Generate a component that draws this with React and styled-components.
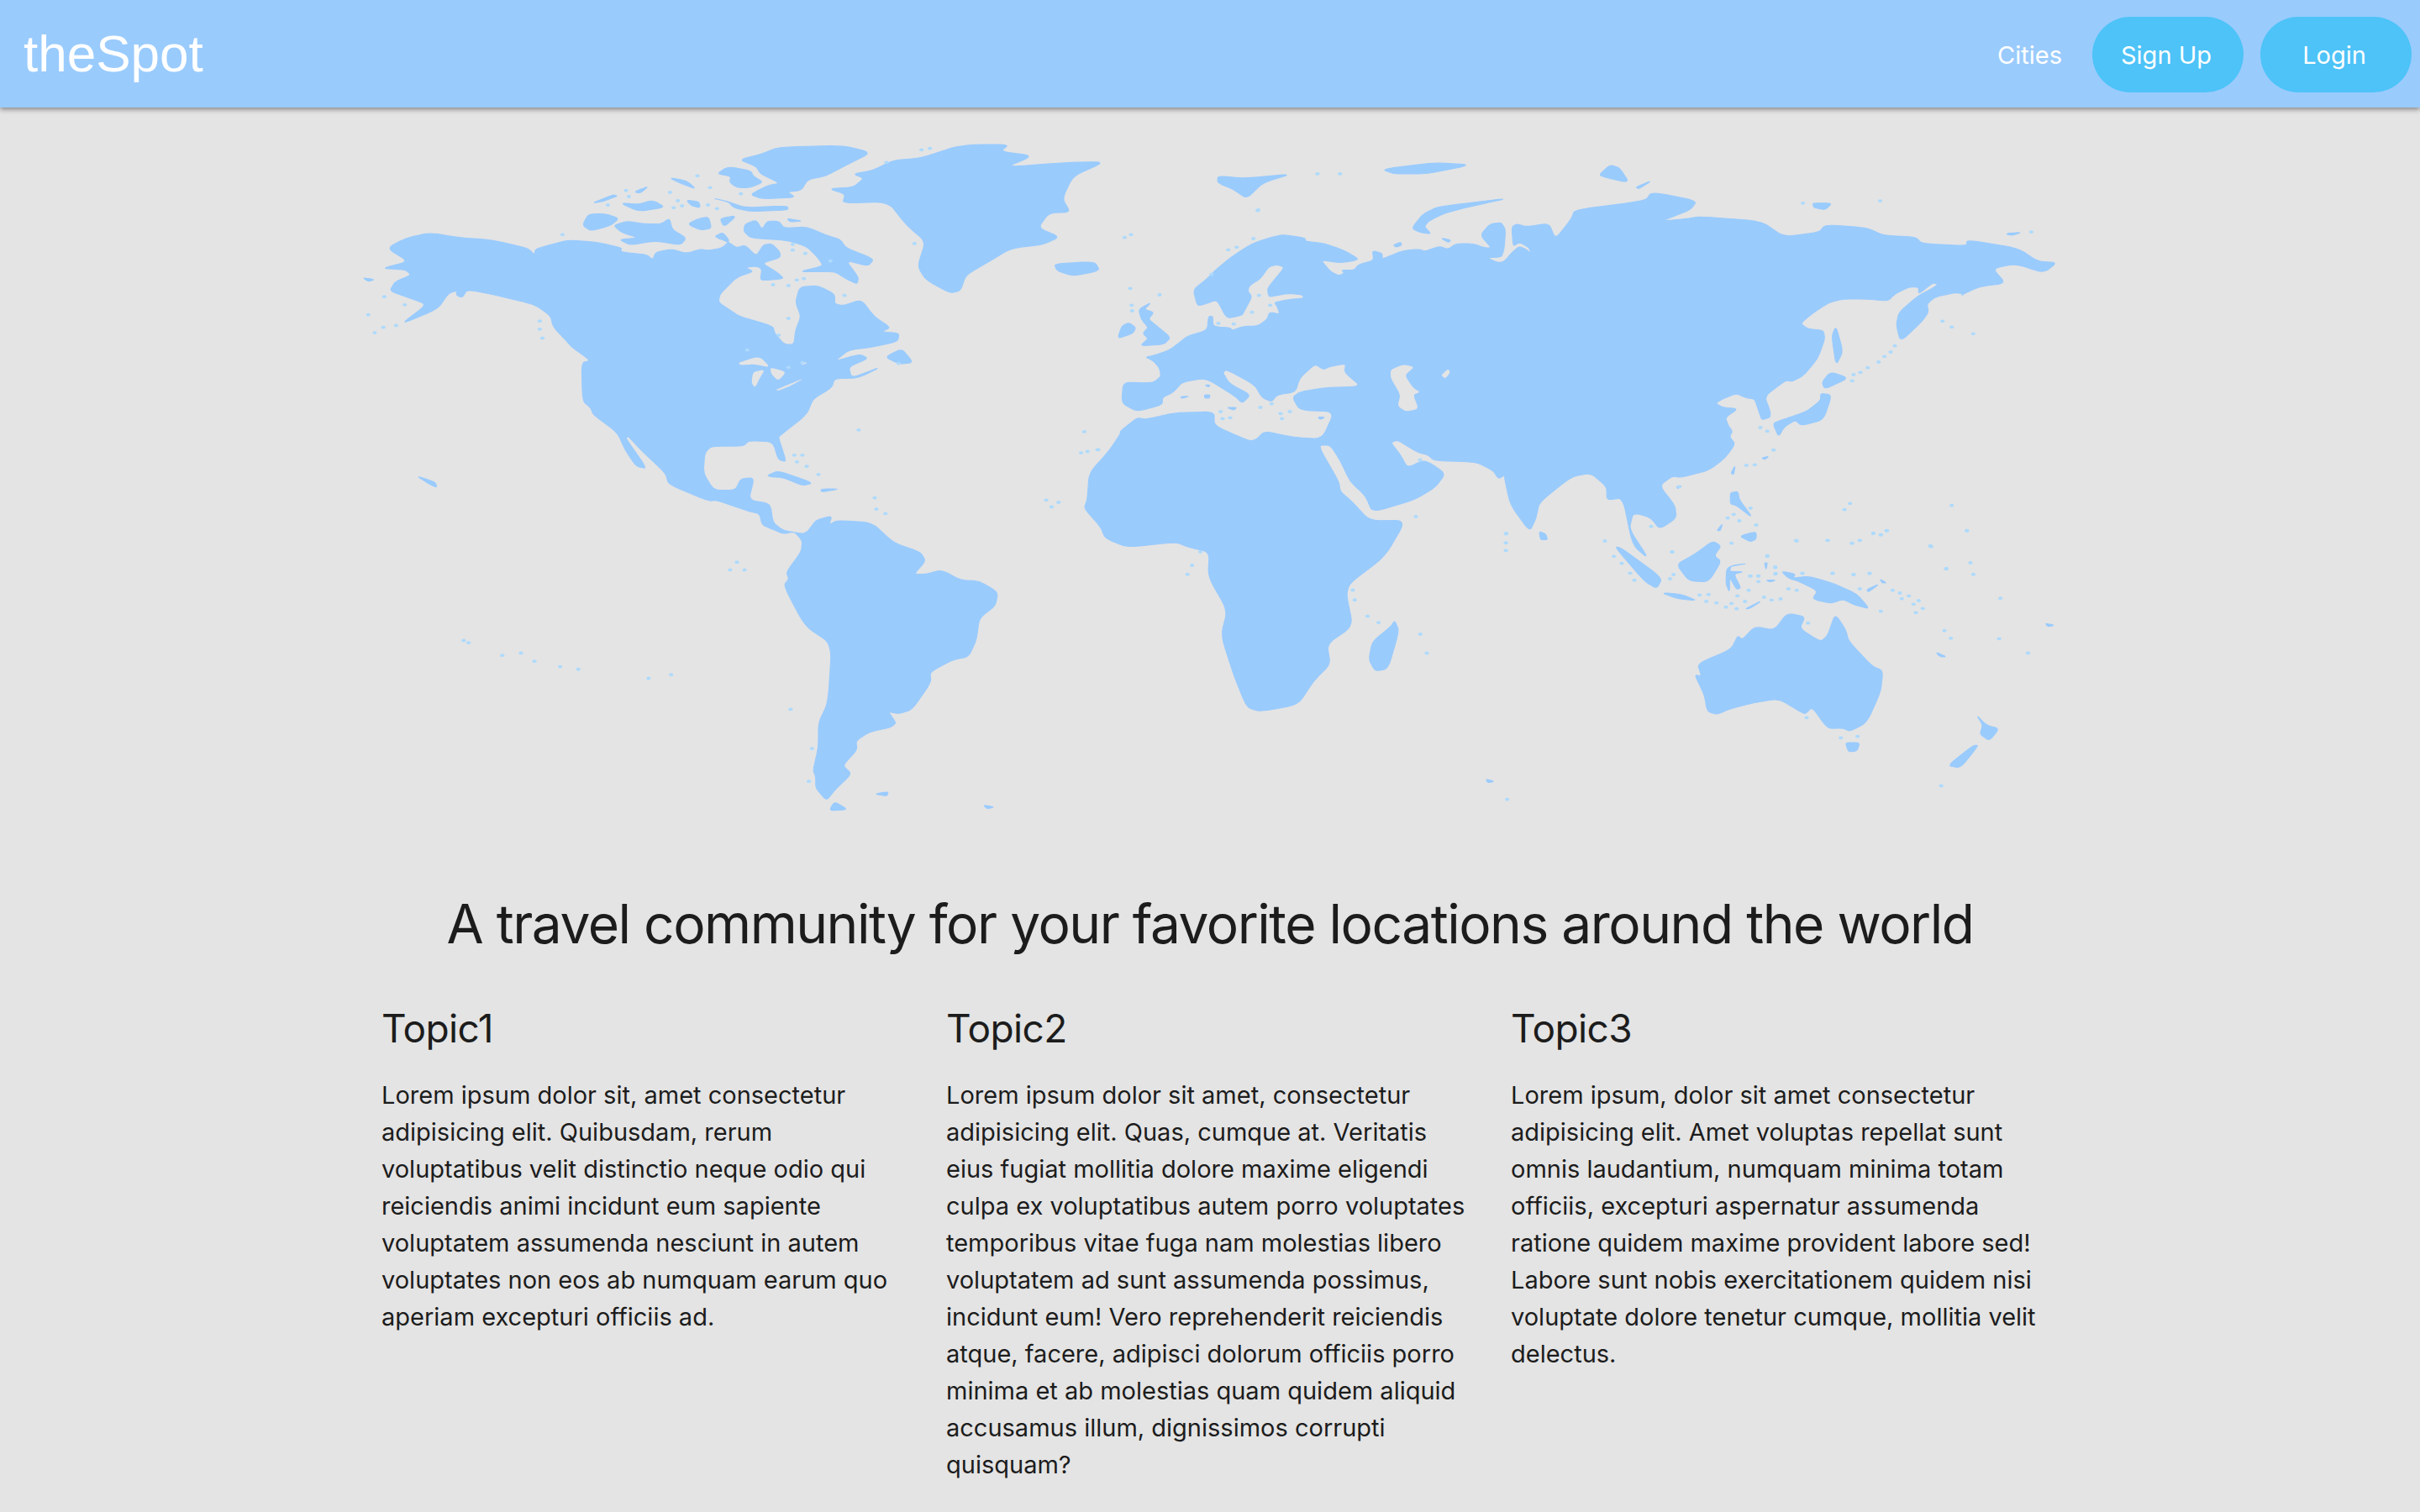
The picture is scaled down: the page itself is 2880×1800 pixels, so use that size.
import styled, { createGlobalStyle } from 'styled-components'

const GlobalStyle = createGlobalStyle`
  html, body { margin: 0; padding: 0; background: #e4e4e4; }
  body { font-family: Inter, "Noto Sans", sans-serif; color: #1c1c1c; }
`

const Page = styled.div`
  width: 2880px;
  min-height: 1800px;
  overflow: hidden;
  background: #e4e4e4;
`

const NavBar = styled.header`
  height: 128px;
  box-sizing: border-box;
  padding: 2px 10px 0 28px;
  display: flex;
  align-items: center;
  justify-content: space-between;
  background: #9acbfd;
  box-shadow: 0 2px 6px rgba(0, 0, 0, 0.45);
  position: relative;
`

const Logo = styled.div`
  font-family: "Liberation Sans", Arial, sans-serif;
  font-size: 62px;
  color: #fff;
  margin-bottom: 3px;
`

const NavLinks = styled.nav`
  display: flex;
  align-items: center;
  gap: 20px;
`

const NavLink = styled.a`
  color: #fff;
  font-size: 29px;
  margin-right: 16px;
`

const NavButton = styled.button`
  width: 180px;
  height: 90px;
  padding: 0 4px 0 0;
  border: 0;
  border-radius: 45px;
  background: #4dc3f8;
  color: #fff;
  font-family: inherit;
  font-size: 29px;
`

const MapSvg = styled.svg`
  display: block;
  width: 2080px;
  height: 840px;
  margin: 12px auto 0;
`

const Headline = styled.h1`
  margin: 80px 0 0;
  text-align: center;
  font-size: 64px;
  line-height: 80px;
  font-weight: 400;
  letter-spacing: -1.47px;
`

const Columns = styled.section`
  display: grid;
  grid-template-columns: repeat(3, 630px);
  column-gap: 42px;
  padding: 54px 0 0 454px;
`

const TopicTitle = styled.h2`
  margin: 0 0 28px;
  font-size: 46px;
  line-height: 60px;
  font-weight: 400;
  letter-spacing: -0.6px;
`

const TopicText = styled.p`
  margin: 0;
  font-size: 29px;
  line-height: 44px;
`

const topics = [
  {
    title: 'Topic1',
    text: 'Lorem ipsum dolor sit, amet consectetur adipisicing elit. Quibusdam, rerum voluptatibus velit distinctio neque odio qui reiciendis animi incidunt eum sapiente voluptatem assumenda nesciunt in autem voluptates non eos ab numquam earum quo aperiam excepturi officiis ad.',
  },
  {
    title: 'Topic2',
    text: 'Lorem ipsum dolor sit amet, consectetur adipisicing elit. Quas, cumque at. Veritatis eius fugiat mollitia dolore maxime eligendi culpa ex voluptatibus autem porro voluptates temporibus vitae fuga nam molestias libero voluptatem ad sunt assumenda possimus, incidunt eum! Vero reprehenderit reiciendis atque, facere, adipisci dolorum officiis porro minima et ab molestias quam quidem aliquid accusamus illum, dignissimos corrupti quisquam?',
  },
  {
    title: 'Topic3',
    text: 'Lorem ipsum, dolor sit amet consectetur adipisicing elit. Amet voluptas repellat sunt omnis laudantium, numquam minima totam officiis, excepturi aspernatur assumenda ratione quidem maxime provident labore sed! Labore sunt nobis exercitationem quidem nisi voluptate dolore tenetur cumque, mollitia velit delectus.',
  },
]

// the coastlines were traced in several crops, each has its own origin and scale
const west = [400, 140, 0.6378, 0.5357]
const east = [1300, 140, 0.7653, 0.5357]
const europe = [1320, 240, 1 / 3, 1 / 3]
const canada = [660, 160, 1 / 3, 1 / 3]
const japan = [1950, 300, 1 / 3, 1 / 3]
const oceania = [1900, 620, 1 / 3, 1 / 3]

const trace = ([ox, oy, sx, sy], text) =>
  text.split(' ').map((pair) => {
    const [x, y] = pair.split(',').map(Number)
    return [ox + x * sx, oy + y * sy]
  })

const americas = [
  ...trace(west, '95,290 130,268 175,256 225,266 290,272 358,290 370,305 372,292'),
  ...trace(canada, '0,390 50,378 150,385 240,405 235,420 330,430 350,448 362,420 420,410 470,425 520,410 550,415 600,405 625,380 600,350 570,365 620,385 650,405 680,395 720,435 745,395 775,390 805,420 805,440 740,460 790,490 820,515 760,520 735,520 740,480 720,470 680,475 710,490 650,510 590,570 585,600 630,630 660,650 780,685 785,710 820,750 855,750 860,700 880,650 860,600 875,545 940,540 1000,570 1000,605 1030,612 1095,590 1140,650 1200,690 1165,705 1230,710 1225,740 1130,760 1050,770 1000,810 1090,785 1120,800 1050,830 1060,870 1165,830 1085,870'),
  ...trace(west, '930,580 925,600 890,625 878,660 830,705 825,710 840,765 825,760 815,720 770,718 760,730 700,730 688,745 685,790 705,828 745,828 755,803 780,800 770,850 810,858 815,900 835,918 870,925 880,920 895,895 925,885 920,905 935,895 1000,900 1040,945 1090,965 1100,985 1078,1015 1100,1015 1130,1005 1165,1028 1200,1030 1235,1055 1230,1085 1200,1112 1195,1160 1180,1198 1150,1205 1108,1232 1110,1255 1075,1315 1050,1325 1030,1320 1045,1345 1035,1355 995,1365 970,1385 972,1405 945,1440 962,1458 930,1495 915,1518 895,1490 895,1465 890,1450 900,1400 900,1345 918,1300 925,1170 875,1130 835,1040 845,1025 840,1010 868,965 870,940 855,920 835,925 815,915 795,905 790,880 770,875 710,850 695,852 620,815 615,790 570,740 545,708 540,712 580,780 560,775 540,740 525,700 480,660 475,645 460,630 458,545 475,540 440,510 425,490 405,465 400,440 370,415 300,395 245,382 235,400 225,395 225,385 210,390 190,425 120,460 170,415 135,400 100,385 110,365 140,350 130,338 85,335 135,320'),
]

const eurasiaAfrica = [
  ...trace(europe, '50,645 130,648 160,645 185,625 180,595 160,570 130,555 160,550 215,530 250,505 280,480 350,460 355,410 370,410 370,440 385,448 430,450 440,460 480,445 530,445 565,420 572,395 610,402 600,375 590,360 640,350 695,345 690,332 640,328 600,335 570,340 565,310 610,255 625,235 600,225 570,232 540,275 500,300 495,320 510,340 480,395 475,405 420,418 385,350 345,365 315,372 300,315 350,275 385,240 440,195 510,150 570,130 620,118 700,130 700,142 770,150 840,175 890,205 870,212 820,218 755,208 790,250 820,265 840,255 830,245 875,245 890,225 945,210 940,175 975,185 975,205 1000,195 1050,175 1110,170 1125,178 1180,160 1210,170 1240,150 1300,150 1340,165 1365,165 1325,120 1360,80 1400,75 1415,100 1410,170 1400,198 1350,200 1385,218 1410,215 1440,180 1465,160 1490,172 1505,185 1500,165 1465,145 1442,160 1438,90 1455,80 1490,90'),
  ...trace(east, '710,235 720,270 745,225 750,205 860,185 870,165 940,185 930,205 885,230 925,225 945,220 1040,230 1075,265 1130,255 1140,238 1205,245 1230,262 1280,265 1290,280 1360,285 1360,272 1440,290 1470,320 1500,322 1480,345 1435,325 1400,335 1420,368 1380,375 1350,395'),
  ...trace(japan, '1165,150 1130,145 1060,160 1030,185 1035,215 1010,250 935,320 920,260 930,215 1000,155 1050,130 1070,115 1050,110 1000,150 1000,125 965,125 915,150 890,175 820,168 730,168 680,180 620,220 578,255 605,275 660,280 665,310 640,380 590,440 550,462 525,458 450,515 470,570 470,590 440,600 430,570 415,525 380,520 350,505 300,525 275,540 300,555 355,560 310,590 320,620 335,640 325,660 345,685 310,735 250,780 150,805 120,800 75,835 130,905 135,950 75,990 45,950 0,935'),
  ...trace(east, '840,882 835,915 865,980 840,950 825,845 800,850 800,820 775,790 745,798 695,855 690,890 680,920 650,860 640,795'),
  ...trace(europe, '1415,975 1390,990 1370,960 1310,930 1160,925 1140,905 1100,895 1060,870 1030,852 1005,860 1040,905 1065,950 1120,925 1150,935 1200,972 1165,1020 1090,1065 940,1110 915,1050 860,1000 825,925 790,870 745,870 820,1000 825,1035 870,1075 930,1140 1060,1138'),
  ...trace(east, '455,975 400,1035 395,1060 405,1130 365,1170 370,1215 345,1250 320,1305 260,1320 240,1310 220,1240 200,1150 210,1095 180,1020 182,965 150,955 130,943 55,955 20,935 13,910 -13,868 -8,850 -5,790'),
  ...trace(europe, '0,890 40,830 40,820 100,772 130,778 230,755 375,750 375,800 500,855 525,850 555,820 660,842 760,848 805,750 680,745 655,700 680,680 770,665 900,660 840,610 845,578 785,590 765,600 735,580 680,630 665,680 600,690 580,715 545,700 520,655 420,600 405,610 430,650 505,690 475,720 450,695 345,630 260,645 230,680 190,700 190,725 100,750 45,720'),
]

const land = [
  americas,
  eurasiaAfrica,
  // greenland, iceland
  trace(west, '945,190 1030,187 1065,240 1100,275 1085,330 1100,360 1145,390 1165,385 1175,350 1215,322 1260,290 1320,282 1350,265 1310,245 1330,212 1370,210 1355,180 1375,130 1435,98 1360,100 1250,110 1300,85 1240,75 1255,60 1190,60 1155,65 1130,75 1090,90 1040,95 1000,118 965,125 985,135 965,155 920,158 950,170'),
  trace(west, '1340,325 1415,320 1425,340 1375,352 1345,340'),
  // canadian arctic
  trace(canada, '680,320 720,305 740,340 760,310 800,310 820,335 900,330 970,360 1020,375 1040,405 1140,445 1120,470 1040,450 1085,510 1080,535 1040,515 1000,490 940,490 875,490 960,470 940,440 900,400 830,378 700,370 675,345'),
  trace(canada, '660,90 740,70 800,45 1030,40 1130,65 1040,110 965,150 905,160 880,200 830,205 860,225 740,230 700,215 735,195 770,180 805,175 735,140 720,115'),
  trace(canada, '580,140 620,115 700,130 710,150 745,170 700,190 650,190 625,170 630,150'),
  trace(canada, '565,228 620,240 680,262 830,255 835,270 700,275 640,262 620,240'),
  trace(canada, '235,245 300,250 350,235 395,260 300,275'),
  trace(canada, '135,245 210,215 225,220 170,240'),
  trace(canada, '285,205 335,185 305,210'),
  trace(canada, '410,155 470,165 505,195 450,175'),
  trace(canada, '470,235 515,240 520,262 490,255'),
  trace(canada, '100,325 120,285 180,283 230,300 200,325 130,345'),
  trace(canada, '210,325 260,310 320,320 380,320 410,300 420,340 470,370 450,395 360,380 270,395 230,375 300,370 240,350'),
  trace(canada, '475,320 515,300 550,295 560,335 520,342'),
  trace(canada, '590,300 650,290 605,330'),
  trace(canada, '830,300 885,310 840,312'),
  trace(canada, '1180,795 1240,765 1280,815 1230,820'),
  // caribbean, small ones round the americas
  trace(west, '805,795 825,785 890,812 870,818 835,800 810,798'),
  trace(west, '905,825 940,825 905,832'),
  trace(west, '50,356 72,360 60,364'),
  trace(west, '150,796 185,810 188,822 175,815'),
  trace(west, '1005,1503 1030,1498 1028,1508'),
  trace(west, '930,1520 955,1538 920,1540'),
  trace(west, '1208,1528 1228,1532 1215,1536'),
  // europe
  trace(europe, '105,385 150,360 125,385 160,395 140,420 165,440 220,485 195,510 110,515 140,490 120,470 140,450 115,420'),
  trace(europe, '30,490 45,445 70,432 95,450 85,470'),
  trace(europe, '420,735 455,735 445,745'),
  trace(europe, '340,690 360,690 358,702 342,702'),
  trace(europe, '342,655 360,655 355,662'),
  trace(europe, '255,697 285,695 260,703'),
  trace(europe, '745,770 770,770 755,778'),
  trace(europe, '705,320 730,312 752,332 725,340'),
  trace(europe, '1080,95 1120,45 1170,20 1280,5 1425,-12 1300,15 1200,40 1140,70 1125,90 1150,115 1110,110'),
  trace(europe, '1015,155 1040,145 1045,155 1025,163'),
  trace(europe, '1185,130 1220,138 1210,146'),
  // east asia
  trace(japan, '480,612 510,600 600,570 650,530 650,505 690,510 660,600 580,620 560,600 520,625 500,660'),
  trace(japan, '685,428 750,450 665,490 655,465'),
  trace(japan, '705,265 730,355 705,405 690,300'),
  trace(japan, '328,860 355,855 360,885 408,950 350,905 328,900'),
  trace(japan, '330,790 345,762 340,795'),
  trace(japan, '360,1015 420,998 420,1025 400,1035'),
  trace(japan, '135,838 155,835 140,845'),
  trace(japan, '280,995 300,970 292,995'),
  trace(japan, '440,735 465,730 450,742'),
  // indonesia, oceania
  trace(oceania, '285,155 350,120 415,72 445,90 420,125 445,145 400,218 330,215'),
  trace(oceania, '65,92 90,98 235,205 215,242 170,215'),
  trace(oceania, '232,257 300,262 360,285 290,278'),
  trace(oceania, '465,165 540,152 480,160 475,182 525,182 490,190 515,240 500,245 475,200 475,255 462,225'),
  trace(oceania, '660,180 710,190 700,205 760,198 850,225 930,262 975,315 920,300 880,280 840,295 770,280 790,250 720,215 685,205'),
  trace(oceania, '530,315 590,285 550,312'),
  trace(oceania, '965,245 1010,225 970,255'),
  trace(oceania, '1012,208 1035,222 1020,222'),
  trace(oceania, '600,150 610,150 605,175'),
  trace(oceania, '605,212 640,212 620,218'),
  trace(oceania, '360,510 480,460 505,410 520,425 565,378 635,390 680,330 745,342 725,385 800,432 825,410 852,332 890,390 900,430 985,520 1022,535 1015,610 965,720 905,752 880,740 825,742 770,665 745,690 725,680 650,635 560,650 480,670 430,692 395,680 385,620 350,550 375,555'),
  trace(oceania, '888,792 940,792 930,822 900,825'),
  // new zealand, indian ocean, far south
  trace(east, '1375,1328 1390,1350 1410,1358 1395,1385 1380,1370 1385,1350'),
  trace(east, '1370,1395 1378,1395 1350,1445 1330,1440'),
  trace(east, '470,1118 477,1140 460,1225 440,1230 430,1205 435,1165 465,1130'),
  trace(east, '695,920 705,925 708,938 697,938'),
  trace(east, '612,1470 625,1475 615,1478'),
  trace(east, '1312,1188 1328,1198 1318,1198'),
  trace(east, '1482,1124 1496,1128 1486,1131'),
  // arctic russia
  trace(east, '195,130 240,135 310,125 265,145 240,180 220,160 195,145'),
  trace(east, '450,115 530,100 590,105 520,125 470,125'),
  trace(east, '790,125 805,105 820,112 835,145 790,130'),
  trace(east, '845,155 870,140 850,158'),
  trace(east, '1120,190 1150,190 1140,205 1122,200'),
  trace(east, '1420,258 1445,255 1430,262'),
]

const water = [
  // great lakes
  trace(west, '750,545 790,530 810,555 780,548 755,550'),
  trace(west, '778,565 800,560 790,580 782,600 775,590'),
  trace(west, '810,555 840,565 825,585 812,570'),
  trace(west, '820,605 875,578 850,595 825,607'),
  trace(west, '865,543 880,545 870,550'),
  // caspian, aral
  trace(europe, '1005,600 1050,582 1090,590 1055,620 1085,665 1110,680 1085,690 1105,740 1060,750 1030,730 1040,690 1005,630'),
  trace(europe, '1185,620 1210,598 1218,610 1200,632'),
]

const dots = [
  ...trace(west, '90,398 128,416 60,438 72,478 88,466 112,462 380,452 380,470 385,490 975,694 855,750 870,750 860,765 878,775 900,793 1005,845 1008,870 1025,880 748,988 735,1005 762,1005 238,1162 247,1167 310,1195 345,1190 370,1208 418,1220 452,1226 583,1246 625,1238 848,1315 888,1402 882,1475 1396,698 1390,745 1402,742 1422,738 1325,850 1348,855 1335,865'),
  ...trace(canada, '28,358 190,252 255,200 265,222 412,207 510,148 555,190 665,212 440,237 425,262 455,255 548,252 580,265 850,393 850,413 895,425 780,537 835,540 865,520 890,515 985,452 1035,575 835,657 800,717 688,770 885,815 835,832 1228,818 1285,390 1310,55 1340,50 1185,100'),
  ...trace(europe, '530,32 55,128 78,118 180,333 75,310 80,370 82,390 365,260 425,172 455,163 515,132 535,335 575,370 510,395 390,435 445,437 398,750 405,775 432,772 540,735 580,722 612,757 645,750 617,775 1110,922 1095,1125 1418,1185'),
  ...trace(japan, '1085,247 1118,268 1195,292 915,335 900,357 878,373 857,393 818,413 792,430 768,438 763,460 435,627 460,640 482,707 415,760 385,762 45,980 145,838 400,915 340,937 318,950 360,960 420,975 332,1040 120,1070 755,898 735,920 1118,905 838,1005 885,995 865,1010 1172,995 565,1032 675,1030 762,1040 790,1030 1045,1052 460,1085 400,1157 428,1157 488,1125 488,1150 585,1148 693,1148 768,1152 825,1148 1185,1110 1098,1132'),
  ...trace(oceania, '30,72 62,127 90,152 120,187 135,212 262,207 275,192 270,112 368,265 400,263 392,288 428,293 462,308 482,295 500,314 503,268 530,288 598,273 625,283 657,279 543,248 548,197 578,197 578,217 640,188 638,167 610,127 735,187 843,187 918,192 975,187 940,243 685,243 715,248 1015,323 1057,248 1083,258 1115,268 1090,278 1150,285 1132,298 1165,313 1140,328 755,365 750,703 872,775 932,770 712,70 825,70 912,80 940,70 988,45 1015,50 1037,35 1192,90'),
  ...trace(east, '643,925 643,945 643,962 520,1190 510,1148 1303,952 1360,918 1328,1002 1370,1015 1412,1068 1325,1140 1335,1157 1410,1158 1455,1190 1320,1485 645,1515 405,1050 408,1072 428,1108 445,1122 168,965 155,995 148,1015 8,738 258,205 350,125 385,125 1105,190 1225,185 1460,254'),
]

// polygon with its corners rounded off, the coast in the picture is soft
const toPath = (points) => {
  const mix = (a, b, t) => [a[0] + (b[0] - a[0]) * t, a[1] + (b[1] - a[1]) * t]
  const n = points.length
  return (
    points
      .map((p, i) => {
        const from = mix(p, points[(i + n - 1) % n], 0.3)
        const to = mix(p, points[(i + 1) % n], 0.3)
        return `${i ? 'L' : 'M'}${from[0].toFixed(1)} ${from[1].toFixed(1)}Q${p[0].toFixed(1)} ${p[1].toFixed(1)} ${to[0].toFixed(1)} ${to[1].toFixed(1)}`
      })
      .join('') + 'Z'
  )
}

function WorldMap() {
  return (
    <MapSvg viewBox="400 140 2080 840" aria-hidden="true">
      {land.map((shape, i) => (
        <path key={i} d={toPath(shape)} fill="#9acbfd" stroke="#9acbfd" strokeWidth="1.2" strokeLinejoin="round" />
      ))}
      {water.map((shape, i) => (
        <path key={i} d={toPath(shape)} fill="#e4e4e4" />
      ))}
      {dots.map(([x, y], i) => (
        <ellipse key={i} cx={x} cy={y} rx="2.6" ry="1.9" fill="#aedafc" />
      ))}
    </MapSvg>
  )
}

function App() {
  return (
    <Page>
      <GlobalStyle />
      <NavBar>
        <Logo>theSpot</Logo>
        <NavLinks>
          <NavLink>Cities</NavLink>
          <NavButton>Sign Up</NavButton>
          <NavButton>Login</NavButton>
        </NavLinks>
      </NavBar>
      <WorldMap />
      <Headline>A travel community for your favorite locations around the world</Headline>
      <Columns>
        {topics.map((topic) => (
          <article key={topic.title}>
            <TopicTitle>{topic.title}</TopicTitle>
            <TopicText>{topic.text}</TopicText>
          </article>
        ))}
      </Columns>
    </Page>
  )
}

export default App
